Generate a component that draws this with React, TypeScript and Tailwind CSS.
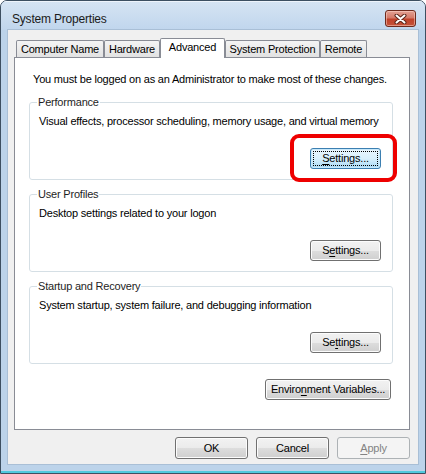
import React from 'react';

const tabs = [
  { label: 'Computer Name', w: 'w-[88px]' },
  { label: 'Hardware', w: 'w-[56px]' },
  { label: 'Advanced', w: 'w-[65px]', active: true },
  { label: 'System Protection', w: 'w-[95px]' },
  { label: 'Remote', w: 'w-[47px]' },
];

const Mn = ({ text, at }: { text: string; at: number }) => (
  <>
    {text.slice(0, at)}
    <span className="underline underline-offset-[2px]">{text[at]}</span>
    {text.slice(at + 1)}
  </>
);

interface BtnProps {
  children: React.ReactNode;
  className?: string;
  focused?: boolean;
  disabled?: boolean;
}

const Btn = ({ children, className = '', focused, disabled }: BtnProps) => {
  if (disabled) {
    return (
      <div className={`flex items-center justify-center rounded-[3px] border border-[#adb2b5] bg-[#f4f4f4] text-[11px] leading-[13px] text-[#838383] ${className}`}>
        {children}
      </div>
    );
  }
  if (focused) {
    return (
      <div className={`rounded-[3px] border border-[#3c7fb1] bg-gradient-to-b from-[#eaf6fd] via-[#d9f0fc] to-[#a7d9f5] p-[2px] shadow-[inset_0_0_0_1px_#c8e9fb] ${className}`}>
        <div className="flex h-full w-full items-center justify-center border border-dotted border-black text-[11px] leading-[13px] text-black">
          {children}
        </div>
      </div>
    );
  }
  return (
    <div className={`flex items-center justify-center rounded-[3px] border border-[#707070] bg-[linear-gradient(#f2f2f2_0%,#ebebeb_50%,#dddddd_51%,#cfcfcf_100%)] text-[11px] leading-[13px] text-black shadow-[inset_0_0_0_1px_#fcfcfc] ${className}`}>
      {children}
    </div>
  );
};

const Group = ({ title, text, children, className = '' }: { title: string; text: string; children: React.ReactNode; className?: string }) => (
  <fieldset className={`ml-[14px] mr-[16px] rounded-[3px] border border-[#d5dfe5] pl-[9px] pr-[11px] pt-[6px] pb-[10px] ${className}`}>
    <legend className="-ml-[2px] px-[1px] text-[11px] leading-[14px] text-[#1e1e1e]">{title}</legend>
    <div className="whitespace-nowrap text-[11px] leading-[13px] text-black">{text}</div>
    <div className="mt-[20px] flex justify-end">{children}</div>
  </fieldset>
);

export default function App() {
  return (
    <div className="h-[474px] w-[426px] bg-white font-['Liberation_Sans',Arial,sans-serif] tracking-[-0.2px]">
      <div className="flex h-full w-full flex-col overflow-hidden rounded-t-[7px] border border-[#3d4f61] bg-[#bcd3ea] shadow-[inset_0_-2px_0_#4fc9dd]">
        {/* title bar */}
        <div className="flex h-[29px] shrink-0 items-start justify-between bg-gradient-to-b from-[#d6e4f3] to-[#c0d6ed] shadow-[inset_0_1px_0_#eef4fb]">
          <div className="pl-[11px] pt-[10px] text-[12px] leading-[16px] text-[#1b1b1b]">System Properties</div>
          <div className="mr-[9px] mt-[9px] flex h-[17px] w-[31px] items-center justify-center rounded-[3px] border border-[#6d2a1d] bg-[linear-gradient(#e3a194_0%,#d47a69_45%,#c0412a_55%,#c4533a_100%)] shadow-[inset_0_0_0_1px_rgba(255,215,205,0.5)]">
            <svg width="13" height="10" viewBox="0 0 13 10">
              <path d="M2.5 1.5 L10.5 8.5 M10.5 1.5 L2.5 8.5" stroke="#5a2418" strokeWidth="4" strokeLinecap="round" />
              <path d="M2.5 1.5 L10.5 8.5 M10.5 1.5 L2.5 8.5" stroke="#ffffff" strokeWidth="2" strokeLinecap="round" />
            </svg>
          </div>
        </div>

        {/* client area */}
        <div className="flex flex-1 px-[7px] pb-[9px]">
          <div className="flex flex-1 flex-col bg-[#f0f0f0] pl-[6px] pr-[8px] pt-[8px] pb-[5px] text-black shadow-[0_0_0_1px_#a9bfd6]">
            {/* tabs */}
            <div className="relative z-10 -mb-px flex h-[20px] items-end pl-[2px]">
              {tabs.map((t) =>
                t.active ? (
                  <div
                    key={t.label}
                    className={`${t.w} flex h-[20px] items-start justify-center rounded-t-[2px] border border-b-0 border-[#898c95] bg-white pt-[2px] text-[11px] leading-[13px]`}
                  >
                    {t.label}
                  </div>
                ) : (
                  <div
                    key={t.label}
                    className={`${t.w} mb-px flex h-[17px] items-start justify-center rounded-t-[2px] border border-b-0 border-[#898c95] bg-gradient-to-b from-[#f4f4f4] to-[#e2e2e2] pt-[2px] text-[11px] leading-[13px]`}
                  >
                    {t.label}
                  </div>
                )
              )}
            </div>

            {/* panel */}
            <div className="flex h-[373px] flex-col border border-[#898c95] bg-white">
              <div className="whitespace-nowrap pl-[18px] pt-[15px] text-[11px] leading-[13px]">
                You must be logged on as an Administrator to make most of these changes.
              </div>

              <Group className="mt-[9px]" title="Performance" text="Visual effects, processor scheduling, memory usage, and virtual memory">
                <div className="relative">
                  <Btn focused className="h-[21px] w-[71px]">
                    <span className="px-[2px]"><Mn text="Settings..." at={0} /></span>
                  </Btn>
                  <div className="absolute -left-[20px] -top-[14px] h-[48px] w-[107px] rounded-[9px] border-[4px] border-[#ee0000]" />
                </div>
              </Group>

              <Group className="mt-[7px]" title="User Profiles" text="Desktop settings related to your logon">
                <Btn className="h-[21px] w-[71px]">
                  <Mn text="Settings..." at={1} />
                </Btn>
              </Group>

              <Group className="mt-[7px]" title="Startup and Recovery" text="System startup, system failure, and debugging information">
                <Btn className="h-[21px] w-[71px]">
                  <Mn text="Settings..." at={2} />
                </Btn>
              </Group>

              <div className="mr-[18px] mt-[15px] flex justify-end">
                <Btn className="h-[21px] w-[126px]">
                  <Mn text="Environment Variables..." at={6} />
                </Btn>
              </div>
            </div>

            {/* dialog buttons */}
            <div className="mt-[7px] flex justify-end gap-[8px]">
              <Btn className="h-[22px] w-[73px]">OK</Btn>
              <Btn className="h-[22px] w-[73px]">Cancel</Btn>
              <Btn disabled className="h-[22px] w-[73px]">
                <Mn text="Apply" at={0} />
              </Btn>
            </div>
          </div>
        </div>
      </div>
    </div>
  );
}
